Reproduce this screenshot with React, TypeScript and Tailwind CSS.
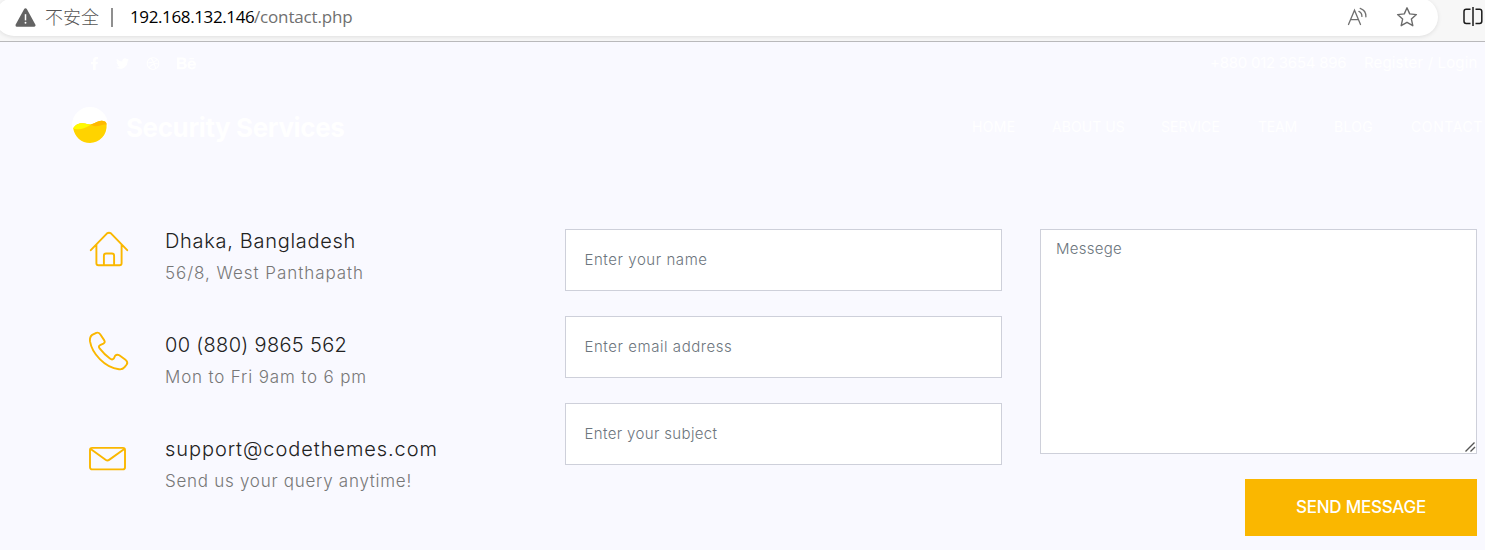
import type { ReactNode } from "react";
import { FaFacebookF, FaTwitter, FaDribbble, FaBehance } from "react-icons/fa";

function BrowserBar() {
  return (
    <div className="flex h-[42px] items-start justify-between overflow-hidden border-b border-[#b9b9bb] bg-[#f7f7f7]">
      <div className="-mt-[2px] -ml-[5px] flex h-[38px] w-[1443px] items-center rounded-full bg-white pl-[20px] shadow-[0_1px_4px_rgba(0,0,0,0.1)]">
        <svg className="h-[19px] w-[21px]" viewBox="0 0 21 19">
          <path d="M10.5 1.8 19 17.2H2Z" fill="#636363" stroke="#636363" strokeWidth="3" strokeLinejoin="round" />
          <path d="M10.5 6.2v6.2" stroke="#fff" strokeWidth="1.5" />
          <circle cx="10.5" cy="14.7" r="0.95" fill="#fff" />
        </svg>
        <span className="ml-[9px] -mt-[2px] w-[54px] font-['Noto_Sans_CJK_SC',sans-serif] text-[18px] font-light leading-[26px] text-[#555]">不安全</span>
        <span className="ml-[12px] h-[19px] w-[2px] bg-[#8f8f8f]" />
        <span className="ml-[17px] w-[124px] whitespace-nowrap font-['Open_Sans',sans-serif] text-[17px] leading-6 tracking-[-0.38px] text-black">192.168.132.146</span>
        <span className="whitespace-nowrap font-['Open_Sans',sans-serif] text-[17px] leading-6 tracking-[-0.16px] text-[#707070]">/contact.php</span>
        <svg className="-mt-[1px] ml-auto h-[20px] w-[22px]" viewBox="0 0 22 20" fill="none" stroke="#707070" strokeWidth="1.3" strokeLinecap="round">
          <path d="M1.5 17.5 7.5 3.2 13.5 17.5M3.7 12.6H11.3M11.9 4.4Q15 5.8 14.9 9.4M13.2 1.3Q19.2 3.3 18.9 9.8" />
        </svg>
        <svg className="ml-[27px] mr-[20px] h-[22px] w-[22px]" viewBox="0 0 22 22" fill="none" stroke="#6b6b6b" strokeWidth="1.4" strokeLinejoin="round">
          <path d="m11 1.8 2.7 6.1 6.7.7-5 4.5 1.4 6.6-5.800-3.400-5.800 3.400 1.400-6.600-5-4.500 6.700-.7Z" />
        </svg>
      </div>
      <svg className="mt-[6px] h-[22px] w-[23px]" viewBox="0 0 23 22" fill="none" stroke="#1b1b1b" strokeWidth="1.5">
        <path d="M8.5 3.3H4.2Q2 3.3 2 5.5v9.800q0 2.200 2.200 2.200H8.500M13.500 3.300H17.600Q19.800 3.300 19.800 5.500v9.800q0 2.200-2.200 2.200H13.500M11 1v19" />
      </svg>
    </div>
  );
}

function Logo() {
  return (
    <svg className="h-[38px] w-[38px]" viewBox="0 0 38 38">
      <circle cx="19" cy="18" r="18" fill="#fff" />
      <path d="M2.200 21.500C4 17.500 8 16 12 16.200c4 .2 6 1.900 9 .9 3.500-1.200 6.500-3.800 10-3.400 3.500.3 4.600 1.800 4.600 4.300A16.800 16.800 0 0 1 19 36C10.500 36 3.600 30 2.200 21.500Z" fill="#ffd300" />
      <path d="M2.200 21.500C4 17.500 8 16 12 16.200c3.500.2 5.500 1.600 8.200 1.100-3.500 2.300-6.200 4.200-10.200 4.600-3.500.3-6 .5-7.800-.4Z" fill="#fffa00" />
      <path d="M19.500 17.500C24 16.500 27 13.300 31 13.700c3.500.3 4.600 1.800 4.600 3.800-4.600-.6-8.600 2.500-12.600 1.500Z" fill="#ffb900" />
    </svg>
  );
}

function HomeIcon() {
  return (
    <path d="M1.800 19.200 17.800 2.600Q20 .8 22.200 2.600L38.200 19.200M7.400 13.800V32.200Q7.400 34.200 9.400 34.200H30.600Q32.600 34.200 32.600 32.200V13.800M14.900 34.200V24.700Q14.900 22.500 17.100 22.500H22.900Q25.100 22.500 25.100 24.700V34.200" />
  );
}

function PhoneIcon() {
  return (
    <path transform="translate(0 -3.800)" d="M7.300 1.600 3.200 3.700Q.5 5.600 1 10.200C3 22 15.500 36.500 30 38.100Q33.500 38.600 35.600 36L37.700 33.300Q39.200 31 36.800 28.900L30.300 24.100Q28 22.700 26.200 24.500L24.900 27.200Q23.300 29.200 20.900 27.400C16.700 24.200 13.500 20.900 10.600 17.200Q8.800 14.800 11.600 13.600L14.400 12.400Q16.500 11.400 15.300 9.200L11.200 3.100Q9.700.9 7.300 1.600Z" />
  );
}

function MailIcon() {
  return (
    <>
      <rect x="1" y="8.900" width="35" height="21.500" rx="2.200" />
      <path d="M1.700 10 16.900 20.900Q18.500 22 20.100 20.900L35.300 10" />
    </>
  );
}

function ContactItem({ icon, title, detail }: { icon: ReactNode; title: ReactNode; detail: ReactNode }) {
  return (
    <div className="flex h-[104px] items-start">
      <svg className="mt-[1px] h-[40px] w-[40px] shrink-0 overflow-visible" viewBox="0 0 40 40" fill="none" stroke="#fab700" strokeWidth="1.9" strokeLinecap="round" strokeLinejoin="round">
        {icon}
      </svg>
      <div className="ml-[36px] whitespace-nowrap">
        <h5 className="h-[32px] text-[20px] font-light leading-[22px] text-[#222]">{title}</h5>
        <p className="text-[17px] font-light leading-[22px] text-[#777]">{detail}</p>
      </div>
    </div>
  );
}

const inputClass =
  "block h-[62px] w-[437px] rounded-none border border-[#ced0da] bg-white px-[18.5px] pb-[2px] text-[15px] font-light text-[#6c757d] outline-none placeholder:text-[#6c757d]";

export default function App() {
  return (
    <div className="h-[550px] w-[1485px] overflow-hidden bg-[#f9f9ff] font-['Inter',sans-serif]">
      <BrowserBar />
      <header className="text-white">
        <div className="flex h-[42px] items-center justify-between pr-[8px] pl-[88px]">
          <div className="flex items-center text-[13px]">
            <FaFacebookF className="w-[13px]" />
            <FaTwitter className="ml-[15px] w-[13px]" />
            <FaDribbble className="ml-[17px] w-[14px]" />
            <FaBehance className="ml-[17px] h-[19px] w-[19px]" />
          </div>
          <div className="flex text-[15px] whitespace-nowrap">
            <span className="w-[154px] tracking-[-0.25px]">+880 012 3654 896</span>
            <span className="w-[113px] tracking-[0.15px]">Register / Login</span>
          </div>
        </div>
        <div className="flex h-[84px] items-center justify-between pl-[71px]">
          <div className="flex items-center">
            <Logo />
            <span className="mt-[2px] ml-[17px] text-[26px] font-bold tracking-[-0.4px]">Security Services</span>
          </div>
          <nav className="flex text-[14px] whitespace-nowrap">
            <a className="w-[80px] tracking-[0.3px]">HOME</a>
            <a className="w-[109px] tracking-[0.05px]">ABOUT US</a>
            <a className="w-[97px] tracking-[0.1px]">SERVICE</a>
            <a className="w-[76px] tracking-[-0.2px]">TEAM</a>
            <a className="w-[77px] tracking-[0.3px]">BLOG</a>
            <a className="w-[74px] tracking-[0.6px]">CONTACT</a>
          </nav>
        </div>
      </header>
      <main className="flex pt-[61px] pl-[89px]">
        <section className="w-[476px] pt-[1px]">
          <ContactItem
            icon={<HomeIcon />}
            title={<span className="tracking-[0.7px]">Dhaka, Bangladesh</span>}
            detail={<span className="tracking-[0.95px]">56/8, West Panthapath</span>}
          />
          <ContactItem
            icon={<PhoneIcon />}
            title={<span className="tracking-[0.32px]">00 (880) 9865 562</span>}
            detail={<span className="tracking-[0.84px]">Mon to Fri 9am to 6 pm</span>}
          />
          <ContactItem
            icon={<MailIcon />}
            title={<span className="tracking-[0.93px]">support@codethemes.com</span>}
            detail={<span className="tracking-[0.73px]">Send us your query anytime!</span>}
          />
        </section>
        <section className="flex w-[437px] flex-col gap-[25px]">
          <input className={inputClass + " tracking-[0.56px]"} placeholder="Enter your name" />
          <input className={inputClass + " tracking-[0.56px]"} placeholder="Enter email address" />
          <input className={inputClass + " tracking-[0.36px]"} placeholder="Enter your subject" />
        </section>
        <section className="ml-[38px] flex w-[437px] flex-col items-end">
          <div className="relative">
            <textarea
              className="block h-[225px] w-[437px] resize-none rounded-none border border-[#ced0da] bg-white px-[15px] py-[8px] text-[15px] font-light leading-[22px] tracking-[0.27px] outline-none placeholder:text-[#6c757d]"
              placeholder="Messege"
            />
            <svg className="absolute right-[1px] bottom-[2px] h-[11px] w-[11px]" viewBox="0 0 11 11" stroke="#555" strokeWidth="1.4">
              <path d="M.500 10.500 9.500 1.500M5.500 10.500 10 6" />
            </svg>
          </div>
          <button className="mt-[25px] h-[57px] w-[232px] bg-[#fab700] text-[17px] font-medium tracking-[-0.24px] text-white">SEND MESSAGE</button>
        </section>
      </main>
    </div>
  );
}
